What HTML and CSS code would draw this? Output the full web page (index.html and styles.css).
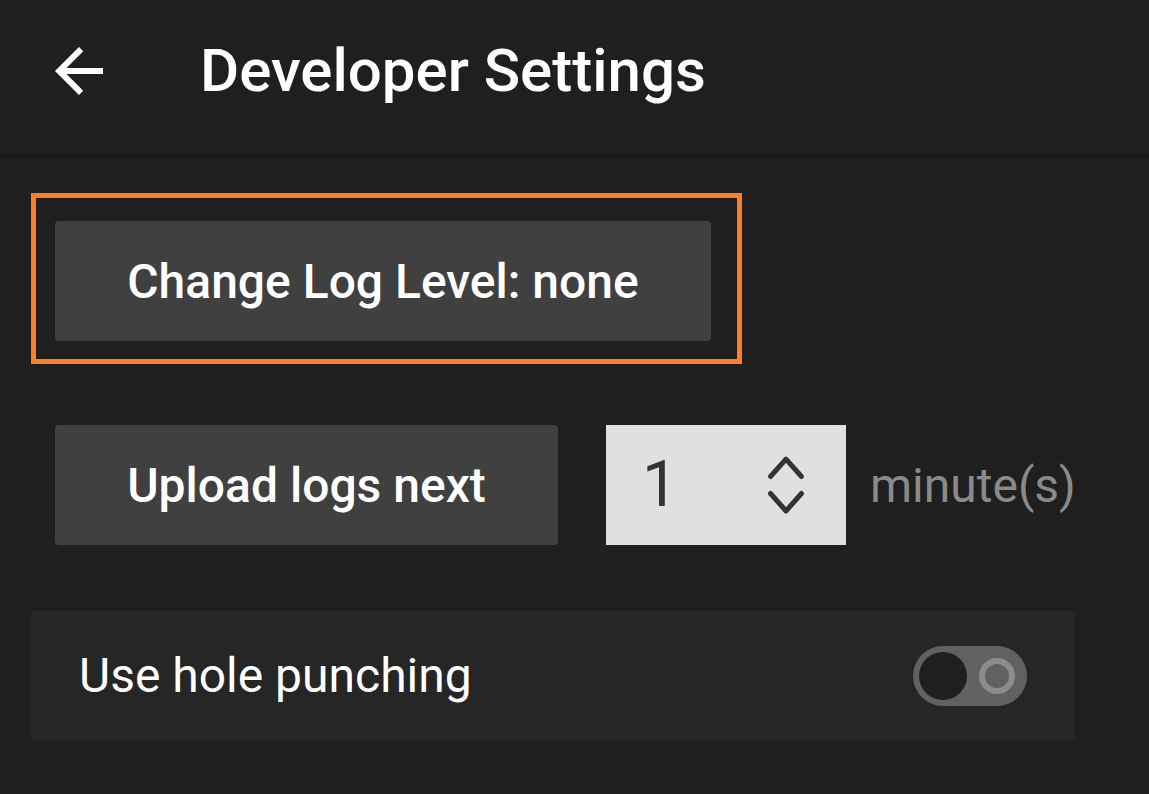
FILE: index.html
```html
<!DOCTYPE html>
<html lang="en">
<head>
<meta charset="utf-8">
<title>Developer Settings</title>
<link rel="stylesheet" href="styles.css">
</head>
<body>
<header class="appbar">
  <button class="back" aria-label="Back">
    <svg viewBox="0 0 24 24" width="72" height="72"><path d="M20 11H7.83l5.59-5.59L12 4l-8 8 8 8 1.41-1.41L7.83 13H20v-2z" fill="#ffffff"/></svg>
  </button>
  <h1 class="title">Developer Settings</h1>
</header>
<main class="content">
  <div class="focus-ring">
    <button class="btn btn-log">Change Log Level: none</button>
  </div>
  <div class="upload-row">
    <button class="btn btn-upload">Upload logs next</button>
    <div class="spinner">
      <span class="spinner-value">1</span>
      <svg class="spinner-arrows" viewBox="0 0 40 62" width="40" height="62">
        <path d="M4.5 22.5 L20 5.2 L35.5 22.5" fill="none" stroke="#333333" stroke-width="5" stroke-linecap="round" stroke-linejoin="round"/>
        <path d="M4.5 39.5 L20 57 L35.5 39.5" fill="none" stroke="#333333" stroke-width="5" stroke-linecap="round" stroke-linejoin="round"/>
      </svg>
    </div>
    <span class="unit">minute(s)</span>
  </div>
  <div class="toggle-row">
    <span class="toggle-label">Use hole punching</span>
    <span class="switch" role="switch" aria-checked="false">
      <span class="switch-thumb"></span>
      <span class="switch-ring"></span>
    </span>
  </div>
</main>
</body>
</html>
```
FILE: styles.css
```css
html, body {
  margin: 0;
  padding: 0;
  background: #1f1f1f;
}
body {
  width: 1149px;
  height: 794px;
  overflow: hidden;
  font-family: Roboto, "Noto Sans", "Liberation Sans", sans-serif;
  color: #ffffff;
}
.appbar {
  height: 142px;
  border-bottom: 3px solid #191919;
  display: flex;
  align-items: center;
  padding: 0 0 12px 43px;
}
.back {
  width: 72px;
  height: 72px;
  padding: 0;
  border: 0;
  background: transparent;
  display: flex;
}
.title {
  margin: 0 0 0 85px;
  font-size: 60px;
  font-weight: 500;
  line-height: 1;
}
.content {
  padding: 36px 0 0 31px;
  display: flex;
  flex-direction: column;
  align-items: flex-start;
}
.focus-ring {
  border: 5px solid #fd7f24;
  padding: 23px 26px 18px 19px;
}
.btn {
  display: flex;
  align-items: center;
  justify-content: center;
  height: 120px;
  padding: 0;
  border: 0;
  border-radius: 4px;
  background: #404040;
  color: #ffffff;
  font-family: Roboto, "Noto Sans", "Liberation Sans", sans-serif;
  font-size: 48px;
  font-weight: 500;
}
.btn-log { width: 656px; }
.btn-upload { width: 503px; }
.upload-row {
  margin: 61px 0 0 24px;
  display: flex;
  align-items: center;
}
.spinner {
  margin-left: 48px;
  width: 240px;
  height: 120px;
  background: #e0e0e0;
  display: flex;
  align-items: center;
  justify-content: space-between;
  padding: 0 40px 0 36px;
  box-sizing: border-box;
}
.spinner-value {
  font-size: 64px;
  color: #333333;
  line-height: 1;
}
.spinner-arrows { display: block; }
.unit {
  margin-left: 24px;
  font-size: 48px;
  color: #8a8a8a;
}
.toggle-row {
  margin-top: 66px;
  width: 1044px;
  height: 129px;
  box-sizing: border-box;
  background: #262626;
  display: flex;
  align-items: center;
  justify-content: space-between;
  padding: 0 48px 0 48px;
}
.toggle-label {
  font-size: 48px;
  color: #ffffff;
}
.switch {
  width: 114px;
  height: 60px;
  border-radius: 30px;
  background: #616161;
  display: flex;
  align-items: center;
  justify-content: space-between;
  padding: 0 12px 0 6px;
  box-sizing: border-box;
}
.switch-thumb {
  width: 48px;
  height: 48px;
  border-radius: 50%;
  background: #1f1f1f;
}
.switch-ring {
  width: 36px;
  height: 36px;
  box-sizing: border-box;
  border-radius: 50%;
  border: 6px solid #8c8c8c;
}
```
